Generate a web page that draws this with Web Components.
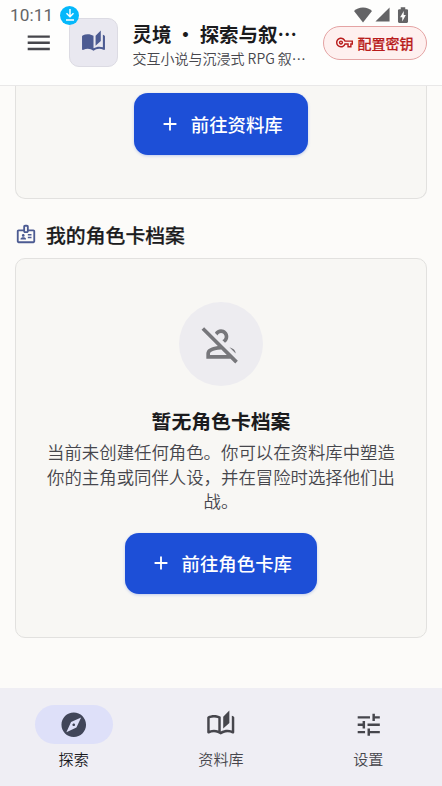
<!DOCTYPE html>
<html lang="zh-CN">
<head>
<meta charset="utf-8">
<title>灵境</title>
<style>
html,body{margin:0;height:100%}
body{font-family:"Noto Sans CJK SC",sans-serif;color:#1b1b1f;background:#fcfbf9}
</style>
</head>
<body>
<story-app></story-app>
<script>
const ICONS={
menu:'M3 18h18v-2H3v2zm0-5h18v-2H3v2zm0-7v2h18V6H3z',
book:'M22.47 5.2c-.47-.24-.96-.44-1.47-.61v12.03c-1.14-.41-2.31-.62-3.5-.62-1.9 0-3.78.54-5.5 1.58V5.48C10.38 4.55 8.51 4 6.5 4c-1.79 0-3.48.44-4.97 1.2-.33.16-.53.51-.53.88v12.08c0 .58.47.99 1 .99.16 0 .32-.04.48-.12C3.69 18.4 5.05 18 6.5 18c2.07 0 3.98.82 5.5 2 1.52-1.18 3.43-2 5.5-2 1.45 0 2.81.4 4.02 1.04.16.08.32.12.48.12.52 0 1-.41 1-.99V6.08c0-.37-.2-.72-.53-.88zM19 .5l-5 5V15l5-4.5V.5z',
library:'M22.47 5.2c-.47-.24-.96-.44-1.47-.61v12.03c-1.14-.41-2.31-.62-3.5-.62-1.9 0-3.78.54-5.5 1.58V5.48C10.38 4.55 8.51 4 6.5 4c-1.79 0-3.48.44-4.97 1.2-.33.16-.53.51-.53.88v12.08c0 .58.47.99 1 .99.16 0 .32-.04.48-.12C3.69 18.4 5.05 18 6.5 18c2.07 0 3.98.82 5.5 2 1.52-1.18 3.43-2 5.5-2 1.45 0 2.81.4 4.02 1.04.16.08.32.12.48.12.52 0 1-.41 1-.99V6.08c0-.37-.2-.72-.53-.88zM10 16.62C8.86 16.21 7.69 16 6.5 16c-1.19 0-2.36.21-3.5.62V6.71C4.11 6.24 5.28 6 6.5 6c1.2 0 2.39.25 3.5.72v9.9zM19 .5l-5 5V15l5-4.5V.5z',
explore:'M12 10.9c-.61 0-1.1.49-1.1 1.1s.49 1.1 1.1 1.1c.61 0 1.1-.49 1.1-1.1s-.49-1.1-1.1-1.1zM12 2C6.48 2 2 6.48 2 12s4.48 10 10 10 10-4.48 10-10S17.52 2 12 2zm2.19 12.19L6 18l3.81-8.19L18 6l-3.81 8.19z',
tune:'M3 17v2h6v-2H3zM3 5v2h10V5H3zm10 16v-2h8v-2h-8v-2h-2v6h2zM7 9v2H3v2h4v2h2V9H7zm14 4v-2H11v2h10zm-6-4h2V7h4V5h-4V3h-2v6z',
key:'M22 19h-6v-4h-2.68c-1.14 2.42-3.6 4-6.32 4-3.86 0-7-3.14-7-7s3.14-7 7-7c2.72 0 5.17 1.58 6.32 4H24v6h-2v4zm-4-2h2v-4h2v-2H11.94l-.23-.67C11.01 8.34 9.11 7 7 7c-2.76 0-5 2.24-5 5s2.24 5 5 5c2.11 0 4.01-1.34 4.71-3.33l.23-.67H18v4zM7 15c-1.65 0-3-1.35-3-3s1.35-3 3-3 3 1.35 3 3-1.35 3-3 3zm0-4c-.55 0-1 .45-1 1s.45 1 1 1 1-.45 1-1-.45-1-1-1z',
badge:'M20 7h-5V4c0-1.1-.9-2-2-2h-2c-1.1 0-2 .9-2 2v3H4c-1.1 0-2 .9-2 2v11c0 1.1.9 2 2 2h16c1.1 0 2-.9 2-2V9c0-1.1-.9-2-2-2zm-9-3h2v5h-2V4zm9 16H4V9h5c0 1.1.9 2 2 2h2c1.1 0 2-.9 2-2h5v11zM9 12c.83 0 1.5.67 1.5 1.5S9.83 15 9 15s-1.5-.67-1.5-1.5S8.17 12 9 12zm3 6H6v-.57c0-.6.36-1.15.92-1.39.64-.28 1.34-.43 2.08-.43s1.44.15 2.08.43c.55.24.92.78.92 1.39V18zm2-6h4v1.5h-4zm0 3h4v1.5h-4z',
personOff:'M20 17.17l-3.37-3.38c.64.22 1.23.48 1.77.76.97.51 1.58 1.52 1.6 2.62zM21.19 21.19l-1.41 1.41L17.17 20H4v-2.78c0-1.12.61-2.15 1.61-2.66 1.29-.66 2.87-1.22 4.67-1.45L1.39 4.22 2.8 2.81l18.39 18.38zM15.17 18l-3-3H12c-2.37 0-4.29.73-5.48 1.34-.32.16-.52.5-.52.88V18h9.17zM12 6c1.1 0 2 .9 2 2 0 .86-.54 1.59-1.3 1.87l1.48 1.48C15.28 10.64 16 9.4 16 8c0-2.21-1.79-4-4-4-1.4 0-2.64.72-3.35 1.82l1.48 1.48C10.41 6.54 11.14 6 12 6z',
add:'M19 13h-6v6h-2v-6H5v-2h6V5h2v6h6v2z',
download:'M10.900 3h2.200v9l3.400-3.400L18 10.100l-6 6-6-6 1.500-1.500 3.400 3.400zM6 18.500h12v2.200H6z',
wifi:'M12 22L0 6.500C3 3.800 7 2 12 2S21 3.800 24 6.500z',
signal:'M2 22h20V2z',
battery:'M17 4.200H15V1.500H9v2.700H7C6.100 4.200 5.300 5 5.300 5.800v15c0 .9.800 1.700 1.700 1.700h10c.9 0 1.700-.8 1.700-1.700v-15c0-.8-.8-1.600-1.700-1.600zM11 20.500V15H8.200L13 6.500V12h2.800L11 20.500z'
};
function define(name,html,init){
  customElements.define(name,class extends HTMLElement{
    constructor(){super();this.attachShadow({mode:'open'}).innerHTML=html}
    connectedCallback(){if(init)init(this,this.shadowRoot)}
  });
}
define('app-icon','<style>:host{display:block;flex:none;width:var(--size,24px);height:var(--size,24px)}svg{display:block;width:100%;height:100%;fill:currentColor}</style><svg viewBox="0 0 24 24"><path/></svg>',
 (el,r)=>r.querySelector('path').setAttribute('d',ICONS[el.getAttribute('name')]));
define('status-bar',`<style>
:host{position:absolute;top:0;left:0;right:0;height:30px;display:flex;align-items:center;padding:0 30px 0 10px;box-sizing:border-box;color:#646466;z-index:3;pointer-events:none}
time{font:400 17.200px/20px Roboto,sans-serif;width:50px;letter-spacing:.1px}
.dl{display:grid;place-items:center;width:19px;height:19px;border-radius:50%;background:#05b8fb;color:#fff;--size:16px}
.right{margin-left:auto;margin-top:-1px;display:flex;align-items:center}
.w{--size:18px;margin-right:2px}.s{--size:17px;margin-right:3px}.b{--size:18px}
</style><time>10:11</time><span class="dl"><app-icon name="download"></app-icon></span><span class="right"><app-icon class="w" name="wifi"></app-icon><app-icon class="s" name="signal"></app-icon><app-icon class="b" name="battery"></app-icon></span>`);
define('app-header',`<style>
:host{display:flex;align-items:center;height:86px;box-sizing:border-box;padding:0 15px 0 24px;background:#fefefd;border-bottom:1px solid #e9e8e8;flex:none}
.menu{--size:29.500px;color:#46464b}
.logo{display:grid;place-items:center;width:49px;height:49px;box-sizing:border-box;margin-left:15px;border:1px solid #dcdbe3;border-radius:10px;background:#e9e8f0;color:#4c5b92;--size:25px}
.t{margin-left:15px;padding-top:2px;width:178px;white-space:nowrap}
h1{margin:0;font-size:19.450px;line-height:27px;font-weight:600;color:#1b1b1d}
p{margin:1px 0 0;font-size:14px;line-height:20px;font-weight:350;color:#46464c}
.key{display:flex;align-items:center;justify-content:center;gap:5px;box-sizing:border-box;width:104px;height:34px;margin-left:12px;border:1px solid #e4a3a3;border-radius:17px;background:#fef0ef;color:#b91c1c;font-size:14px;line-height:20px;font-weight:500;-webkit-text-stroke:.2px currentColor;--size:17px}
</style><app-icon class="menu" name="menu"></app-icon><span class="logo"><app-icon name="book"></app-icon></span><div class="t"><h1>灵境 · 探索与叙…</h1><p>交互小说与沉浸式 RPG 叙…</p></div><span class="key"><app-icon name="key"></app-icon><span>配置密钥</span></span>`);
define('primary-button',`<style>
:host{display:flex;align-items:center;box-sizing:border-box;height:62px;padding:0 25px 0 24.500px;border-radius:14px;background:#1d4fd7;color:#fff;font-size:18.400px;font-weight:500;box-shadow:0 1px 3px #1d4fd740;--size:22px}
app-icon{margin-right:10px}
</style><app-icon name="add"></app-icon><slot></slot>`);
define('section-title',`<style>
:host{display:flex;align-items:center;height:30px;margin:21px 0 8px;gap:9px}
app-icon{--size:22px;color:#4c5b92;margin-bottom:3px}
h2{margin:0;font-size:19.850px;line-height:30px;font-weight:500;-webkit-text-stroke:.25px currentColor;color:#1b1b1d}
</style><app-icon name="badge"></app-icon><h2><slot></slot></h2>`);
define('content-card',`<style>
:host{display:flex;flex-direction:column;align-items:center;box-sizing:border-box;border:1px solid #e2e1df;border-radius:10px;background:#f8f7f4;padding:43px 30px}
</style><slot></slot>`);
define('empty-state',`<style>
:host{display:flex;flex-direction:column;align-items:center;text-align:center}
.c{display:grid;place-items:center;width:84px;height:84px;border-radius:50%;background:#edecf0;color:#77777b;--size:44px}
h3{margin:20px 0 0;font-size:19.850px;line-height:30px;font-weight:600;color:#1b1b1d}
p{margin:4px 0 19px;font-size:17.400px;line-height:24.550px;font-weight:350;color:#46464c;width:350px}
</style><span class="c"><app-icon name="personOff"></app-icon></span><h3><slot name="title"></slot></h3><p><slot></slot></p>`);
define('nav-item',`<style>
:host{display:flex;flex-direction:column;align-items:center;width:147.333px;padding-top:17px;color:#46464c;--size:29.500px}
.pill{display:grid;place-items:center;width:78px;height:39px;border-radius:20px}
:host([active]) .pill{background:#dee0f9;color:#414659}
:host([active]) .l{color:#1b1b1f}
.l{font-size:15.100px;line-height:22px;margin-top:3px;font-weight:350}
</style><span class="pill"><app-icon></app-icon></span><span class="l"><slot></slot></span>`,
 (el,r)=>{const i=r.querySelector('app-icon');i.setAttribute('name',el.getAttribute('icon'));i.shadowRoot.querySelector('path').setAttribute('d',ICONS[el.getAttribute('icon')])});
define('nav-bar','<style>:host{display:flex;flex:none;height:98px;background:#efeef4}</style><slot></slot>');
define('story-app',`<style>
:host{display:flex;flex-direction:column;position:relative;height:786px;overflow:hidden}
main{flex:1;overflow:hidden;padding:0 15px}
.first{border-top:0;border-radius:0 0 10px 10px;height:113px;padding:7px 0 0}
.second{height:380px}
</style><status-bar></status-bar><app-header></app-header>
<main><content-card class="first"><primary-button>前往资料库</primary-button></content-card>
<section-title>我的角色卡档案</section-title>
<content-card class="second"><empty-state><span slot="title">暂无角色卡档案</span>当前未创建任何角色。你可以在资料库中塑造你的主角或同伴人设，并在冒险时选择他们出战。</empty-state><primary-button>前往角色卡库</primary-button></content-card></main>
<nav-bar><nav-item icon="explore" active>探索</nav-item><nav-item icon="library">资料库</nav-item><nav-item icon="tune">设置</nav-item></nav-bar>`);
</script>
</body>
</html>
